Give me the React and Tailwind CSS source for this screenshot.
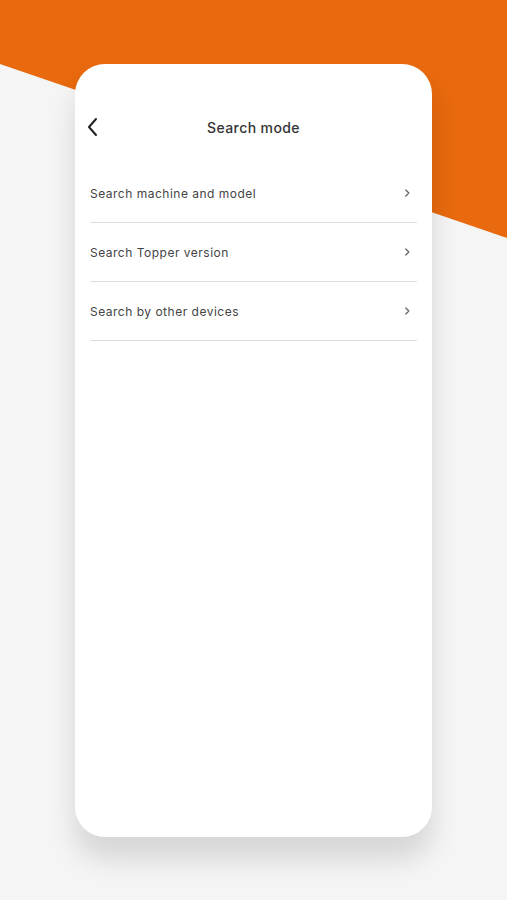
import React from "react";

const items = [
  "Search machine and model",
  "Search Topper version",
  "Search by other devices",
];

function ChevronRight() {
  return (
    <svg width="8" height="10" viewBox="0 0 8 10" fill="none">
      <path d="M2.8 2 L5.8 5 L2.8 8" stroke="#666" strokeWidth="1.3" strokeLinecap="round" strokeLinejoin="round" />
    </svg>
  );
}

export default function App() {
  return (
    <div className="relative w-[507px] h-[900px] overflow-hidden bg-[#f5f5f5] font-['Inter','Noto_Sans',sans-serif]">
      {/* Orange diagonal backdrop */}
      <svg className="absolute inset-0" width="507" height="900" viewBox="0 0 507 900">
        <polygon points="0,0 507,0 507,238 0,64" fill="#e8690e" />
      </svg>

      <div className="relative flex justify-center pt-[64px]">
        <div className="w-[357px] h-[773px] bg-white rounded-[30px] shadow-[0_22px_28px_rgba(0,0,0,0.13)] flex flex-col">
          {/* Header */}
          <div className="relative mt-[41px] h-[44px] flex items-center justify-center">
            <div className="absolute left-[10px] top-1/2 -translate-y-1/2">
              <svg width="16" height="22" viewBox="0 0 16 22" fill="none">
                <path d="M11 3 L4 11 L11 19" stroke="#222" strokeWidth="2" strokeLinecap="round" strokeLinejoin="round" />
              </svg>
            </div>
            <span className="text-[14px] font-medium text-[#333] tracking-[0.4px]">Search mode</span>
          </div>

          {/* List */}
          <ul className="mt-[15px] px-[15px]">
            {items.map((label) => (
              <li
                key={label}
                className="h-[59px] flex items-center justify-between border-b-[1.5px] border-[#dedede] pr-[6px]"
              >
                <span className="text-[12px] text-[#444] tracking-[0.5px] pt-[1px]">{label}</span>
                <ChevronRight />
              </li>
            ))}
          </ul>
        </div>
      </div>
    </div>
  );
}
